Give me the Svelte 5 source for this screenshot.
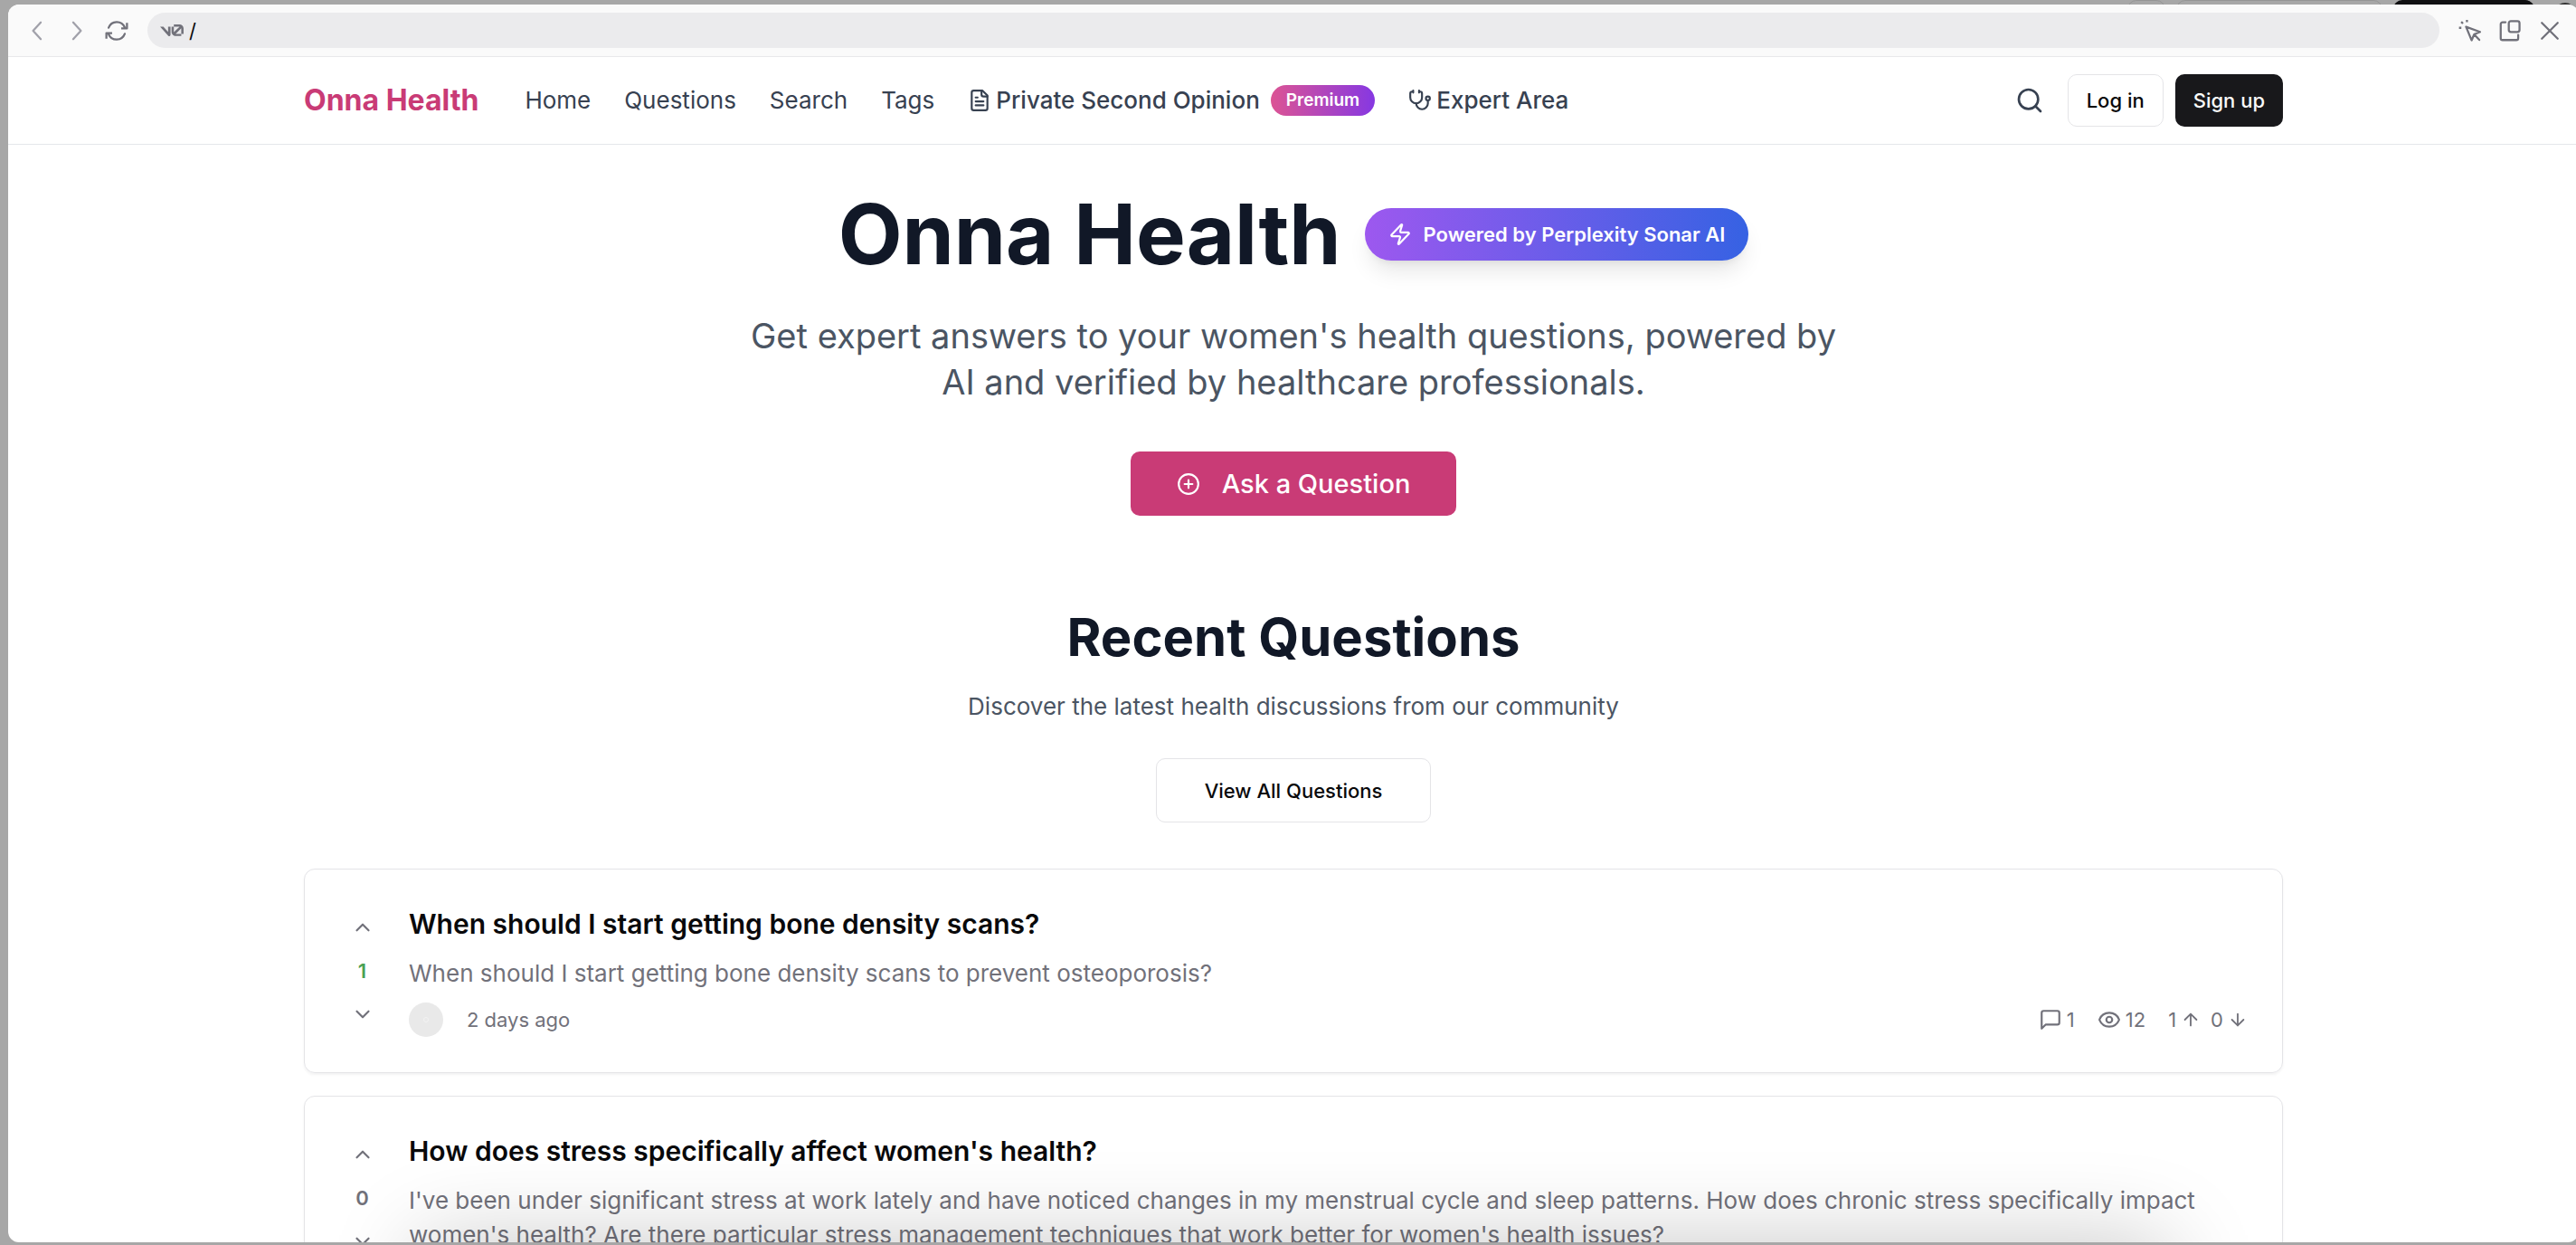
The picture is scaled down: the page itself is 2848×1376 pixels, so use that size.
<script lang="ts">
  interface Question {
    id: number;
    title: string;
    body: string;
    score: number;
    meta?: {
      posted: string;
      comments: number;
      views: number;
      up: number;
      down: number;
    };
  }

  let address = '/';

  const navLinks = ['Home', 'Questions', 'Search', 'Tags'];

  const questions: Question[] = [
    {
      id: 1,
      title: 'When should I start getting bone density scans?',
      body: 'When should I start getting bone density scans to prevent osteoporosis?',
      score: 1,
      meta: { posted: '2 days ago', comments: 1, views: 12, up: 1, down: 0 }
    },
    {
      id: 2,
      title: "How does stress specifically affect women's health?",
      body: "I've been under significant stress at work lately and have noticed changes in my menstrual cycle and sleep patterns. How does chronic stress specifically impact women's health? Are there particular stress management techniques that work better for women's health issues?",
      score: 0
    }
  ];

  let scores: Record<number, number> = Object.fromEntries(questions.map(q => [q.id, q.score]));

  function vote(id: number, delta: number) {
    scores[id] = scores[id] + delta;
  }
</script>

<div class="backdrop">
  <!-- Controls of the editor behind the preview window -->
  <div class="behind" aria-hidden="true">
    <span class="behind-pill small"></span>
    <span class="behind-pill"></span>
    <span class="behind-pill dark"></span>
    <span class="behind-avatar"></span>
  </div>

  <div class="window">
    <div class="toolbar">
      <div class="tools">
        <button class="tool dim" aria-label="Back">
          <svg viewBox="0 0 16 16"><path d="M10.5 2.3 5.3 8l5.2 5.7" /></svg>
        </button>
        <button class="tool dim" aria-label="Forward">
          <svg viewBox="0 0 16 16"><path d="M5.5 2.3 10.7 8l-5.2 5.7" /></svg>
        </button>
        <button class="tool" aria-label="Reload">
          <svg viewBox="0 0 16 16">
            <path d="M2.5 5.9a5.9 5.9 0 0 1 11-.2M13.5 10.1a5.9 5.9 0 0 1-11 .2" />
            <path d="M15 2.6v3.8h-3.9M1 13.4V9.6h3.9" stroke-linecap="butt" />
          </svg>
        </button>
      </div>

      <label class="address">
        <svg class="v0" viewBox="0 0 40 20" aria-hidden="true">
          <path d="M23.392 0h9.527a6.995 6.995 0 0 1 6.995 6.995v9.086h-3.913V6.995c0-.093-.004-.186-.011-.277l-9.527 9.361.097.002h9.441v3.695H26.56c-3.864 0-7.081-3.162-7.081-7.025V3.689h3.913v9.062c0 .174.014.347.04.516l9.736-9.567a3.04 3.04 0 0 0-.249-.011h-9.527V0Z" />
          <path d="M13.769 19.096 0 3.688h5.539l8.084 9.046V3.688h4.131v13.887c0 2.095-2.589 3.083-3.985 1.521Z" />
        </svg>
        <input type="text" aria-label="Address" bind:value={address} />
      </label>

      <div class="tools">
        <button class="tool" aria-label="Select element">
          <svg viewBox="0 0 16 16">
            <path d="M5.2 5.3 14.7 8.8l-4 1.7-1.7 4L5.2 5.3ZM10.7 10.5l3.5 3.7" />
            <path d="M5.8 .6v1.6M1.9 1.9l1.2 1.2M.4 6H2" stroke-linecap="butt" />
          </svg>
        </button>
        <button class="tool" aria-label="Open in new window">
          <svg viewBox="0 0 16 16">
            <path d="M5 2.2H3A1.3 1.3 0 0 0 1.7 3.5V13A1.3 1.3 0 0 0 3 14.3h9.3a1.3 1.3 0 0 0 1.3-1.3v-2.2" />
            <rect x="7.2" y="1.5" width="7.3" height="7.3" rx="1.4" />
          </svg>
        </button>
        <button class="tool" aria-label="Close">
          <svg viewBox="0 0 16 16"><path d="m2.6 2.6 10.8 10.8M13.4 2.6 2.6 13.4" /></svg>
        </button>
      </div>
    </div>

    <div class="page">
      <header class="site-header">
        <div class="container header-row">
          <a class="brand" href="#home">Onna Health</a>
          <nav class="nav">
            {#each navLinks as link}
              <a href="#{link.toLowerCase()}">{link}</a>
            {/each}
            <a class="strong" href="#second-opinion">
              <svg class="icon" viewBox="0 0 24 24">
                <path d="M15 2H6a2 2 0 0 0-2 2v16a2 2 0 0 0 2 2h12a2 2 0 0 0 2-2V7Z" />
                <path d="M14 2v4a2 2 0 0 0 2 2h4M10 9H8M16 13H8M16 17H8" />
              </svg>
              Private Second Opinion
              <span class="premium">Premium</span>
            </a>
            <a class="strong" href="#experts">
              <svg class="icon" viewBox="0 0 24 24">
                <path d="M11 2v2M5 2v2M5 3H4a2 2 0 0 0-2 2v4a6 6 0 0 0 12 0V5a2 2 0 0 0-2-2h-1" />
                <path d="M8 15a6 6 0 0 0 12 0v-3" />
                <circle cx="20" cy="10" r="2" />
              </svg>
              Expert Area
            </a>
          </nav>
          <div class="account">
            <button class="search" aria-label="Search">
              <svg class="icon" viewBox="0 0 24 24">
                <circle cx="11" cy="11" r="8" />
                <path d="m21 21-4.3-4.3" />
              </svg>
            </button>
            <button class="btn outline">Log in</button>
            <button class="btn solid">Sign up</button>
          </div>
        </div>
      </header>

      <main class="container">
        <section class="hero">
          <div class="title-row">
            <h1>Onna Health</h1>
            <span class="powered">
              <svg class="icon" viewBox="0 0 24 24">
                <path d="M4 14a1 1 0 0 1-.78-1.63l9.9-10.2a.5.5 0 0 1 .86.46l-1.92 6.02A1 1 0 0 0 13 10h7a1 1 0 0 1 .78 1.63l-9.9 10.2a.5.5 0 0 1-.86-.46l1.92-6.02A1 1 0 0 0 11 14z" />
              </svg>
              Powered by Perplexity Sonar AI
            </span>
          </div>
          <p class="lead">Get expert answers to your women's health questions, powered by AI and verified by healthcare professionals.</p>
          <button class="btn ask">
            <svg class="icon" viewBox="0 0 24 24">
              <circle cx="12" cy="12" r="10" />
              <path d="M8 12h8M12 8v8" />
            </svg>
            Ask a Question
          </button>
        </section>

        <section class="recent">
          <h2>Recent Questions</h2>
          <p class="sub">Discover the latest health discussions from our community</p>
          <button class="btn outline view-all">View All Questions</button>
        </section>

        <div class="cards">
          {#each questions as question (question.id)}
            <article class="card">
              <div class="votes">
                <button aria-label="Vote up" on:click={() => vote(question.id, 1)}>
                  <svg class="icon" viewBox="0 0 24 24"><path d="m18 15-6-6-6 6" /></svg>
                </button>
                <span class="score" class:positive={scores[question.id] > 0}>{scores[question.id]}</span>
                <button aria-label="Vote down" on:click={() => vote(question.id, -1)}>
                  <svg class="icon" viewBox="0 0 24 24"><path d="m6 9 6 6 6-6" /></svg>
                </button>
              </div>
              <div class="card-body">
                <h3>{question.title}</h3>
                <p>{question.body}</p>
                {#if question.meta}
                  <div class="meta">
                    <span class="avatar"><span class="avatar-dot"></span></span>
                    <span>{question.meta.posted}</span>
                    <div class="stats">
                      <span class="stat">
                        <svg class="icon" viewBox="0 0 24 24">
                          <path d="M21 15a2 2 0 0 1-2 2H7l-4 4V5a2 2 0 0 1 2-2h14a2 2 0 0 1 2 2z" />
                        </svg>
                        {question.meta.comments}
                      </span>
                      <span class="stat">
                        <svg class="icon" viewBox="0 0 24 24">
                          <path d="M2.06 12.35a1 1 0 0 1 0-.7 10.75 10.75 0 0 1 19.88 0 1 1 0 0 1 0 .7 10.75 10.75 0 0 1-19.88 0" />
                          <circle cx="12" cy="12" r="3" />
                        </svg>
                        {question.meta.views}
                      </span>
                      <span class="tally">
                        <span class="stat">
                          {question.meta.up}
                          <svg class="icon arrow" viewBox="0 0 24 24"><path d="m5 12 7-7 7 7M12 19V5" /></svg>
                        </span>
                        <span class="stat">
                          {question.meta.down}
                          <svg class="icon arrow" viewBox="0 0 24 24"><path d="M12 5v14M19 12l-7 7-7-7" /></svg>
                        </span>
                      </span>
                    </div>
                  </div>
                {/if}
              </div>
            </article>
          {/each}
        </div>
      </main>
    </div>
    <div class="bottom-shade" aria-hidden="true"></div>
  </div>
</div>

<style>
  :global(body) {
    background: #a7a7a7;
  }

  .backdrop {
    display: flex;
    flex-direction: column;
    box-sizing: border-box;
    height: 100vh;
    padding: 0 0 3px 9px;
    overflow: hidden;
    font-family: Inter, 'Noto Sans', sans-serif;
    font-size: 26px;
    line-height: 38px;
  }

  h1, h2, h3, p {
    margin: 0;
  }

  button, input {
    font-family: inherit;
  }

  button {
    display: inline-flex;
    align-items: center;
    justify-content: center;
    box-sizing: border-box;
    padding: 0;
    border: none;
    background: transparent;
    color: inherit;
    cursor: pointer;
  }

  a {
    color: inherit;
    text-decoration: none;
  }

  svg {
    display: block;
    flex-shrink: 0;
    fill: none;
    stroke: currentColor;
    stroke-linecap: round;
    stroke-linejoin: round;
  }

  .icon {
    width: 26px;
    height: 26px;
    stroke-width: 2;
  }

  /* Strip above the window */
  .behind {
    display: flex;
    justify-content: flex-end;
    gap: 12px;
    flex: 0 0 5px;
    overflow: hidden;
  }

  .behind-pill {
    box-sizing: border-box;
    width: 228px;
    height: 40px;
    border: 1px solid #959595;
    border-radius: 10px;
  }

  .behind-pill.small {
    width: 42px;
  }

  .behind-pill.dark {
    width: 156px;
    border: none;
    background: #101012;
  }

  .behind-avatar {
    width: 24px;
    height: 24px;
    margin: 3px 0 0 10px;
    border-radius: 50%;
    background: #333;
  }

  /* Preview window */
  .window {
    position: relative;
    display: flex;
    flex-direction: column;
    flex: 1;
    min-height: 0;
    margin-right: -3px;
    border-radius: 12px;
    background: #fff;
    overflow: hidden;
  }

  .toolbar {
    display: flex;
    align-items: center;
    gap: 12px;
    flex: 0 0 57px;
    padding: 0 10px;
    border-bottom: 1px solid #e8e8ea;
    background: #fafafa;
  }

  .tools {
    display: flex;
  }

  .tool {
    width: 44px;
    height: 44px;
    color: #71717a;
  }

  .tool svg {
    width: 26px;
    height: 26px;
    stroke-width: 1.4;
  }

  .tool.dim {
    color: #a1a1aa;
  }

  .address {
    display: flex;
    align-items: center;
    gap: 6px;
    flex: 1;
    height: 39px;
    padding: 0 14px;
    border-radius: 20px;
    background: #ebebed;
  }

  .v0 {
    width: 26px;
    height: 13px;
    fill: #71717a;
    stroke: none;
  }

  .address input {
    flex: 1;
    min-width: 0;
    padding: 0;
    border: none;
    outline: none;
    background: transparent;
    color: #09090b;
    font-size: 22px;
  }

  .page {
    flex: 1;
    min-height: 0;
    overflow: hidden;
  }

  .container {
    box-sizing: border-box;
    max-width: 2188px;
    margin: 0 auto;
  }

  /* Site header */
  .site-header {
    border-bottom: 1px solid #e5e7eb;
  }

  .header-row {
    display: flex;
    align-items: center;
    height: 96px;
  }

  .brand {
    color: #c93b76;
    font-size: 32px;
    font-weight: 700;
  }

  .nav {
    display: flex;
    align-items: center;
    gap: 37px;
    margin-left: 51px;
    color: #374151;
  }

  .nav .strong {
    display: flex;
    align-items: center;
    gap: 5px;
    font-weight: 500;
  }

  .premium {
    display: flex;
    align-items: center;
    height: 34px;
    margin-left: 7px;
    padding: 0 17px;
    border-radius: 17px;
    background: linear-gradient(to right, #dc5494, #8638e2);
    color: #fff;
    font-size: 19px;
    font-weight: 600;
  }

  .account {
    display: flex;
    align-items: center;
    gap: 13px;
    margin-left: auto;
  }

  .search {
    width: 58px;
    height: 58px;
    color: #374151;
  }

  .search .icon {
    width: 32px;
    height: 32px;
  }

  .btn {
    height: 58px;
    padding: 0 20px;
    border-radius: 10px;
    font-size: 22px;
    font-weight: 500;
  }

  .outline {
    border: 1px solid #e4e4e7;
    color: #09090b;
  }

  .solid {
    background: #18181b;
    color: #fafafa;
  }

  /* Hero */
  .hero {
    display: flex;
    flex-direction: column;
    align-items: center;
    padding-top: 51px;
  }

  .title-row {
    display: flex;
    align-items: center;
    gap: 26px;
  }

  h1 {
    color: #111827;
    font-size: 92px;
    font-weight: 700;
    line-height: 96px;
  }

  .powered {
    display: flex;
    align-items: center;
    gap: 13px;
    height: 58px;
    padding: 0 26px;
    border-radius: 29px;
    background: linear-gradient(to right, #9d58ef, #3662e3);
    box-shadow: 0 16px 24px -5px rgba(0, 0, 0, 0.1), 0 6px 10px -6px rgba(0, 0, 0, 0.1);
    color: #fff;
    font-size: 22px;
    font-weight: 600;
  }

  .lead {
    max-width: 1229px;
    margin-top: 39px;
    color: #4b5563;
    font-size: 38px;
    line-height: 51px;
    text-align: center;
  }

  .ask {
    gap: 24px;
    height: 71px;
    margin-top: 51px;
    padding: 0 51px;
    background: #c93b76;
    color: #fff;
    font-size: 29px;
  }

  /* Recent questions */
  .recent {
    display: flex;
    flex-direction: column;
    align-items: center;
    padding-top: 102px;
  }

  h2 {
    color: #111827;
    font-size: 58px;
    font-weight: 700;
    line-height: 64px;
  }

  .sub {
    margin-top: 26px;
    color: #4b5563;
  }

  .view-all {
    height: 71px;
    margin-top: 38px;
    padding: 0 53px;
  }

  .cards {
    display: flex;
    flex-direction: column;
    gap: 25px;
    margin-top: 51px;
  }

  .card {
    display: flex;
    gap: 26px;
    padding: 38px;
    border: 1px solid #e4e4e7;
    border-radius: 12px;
    box-shadow: 0 2px 3px rgba(0, 0, 0, 0.05);
    color: #71717a;
  }

  .votes {
    display: flex;
    flex-direction: column;
    align-items: center;
    gap: 6px;
  }

  .votes button {
    width: 51px;
    height: 52px;
  }

  .score {
    font-size: 22px;
    font-weight: 600;
    line-height: 32px;
  }

  .score.positive {
    color: #4ba154;
  }

  .card-body {
    display: flex;
    flex-direction: column;
    gap: 13px;
    flex: 1;
    min-width: 0;
  }

  h3 {
    color: #09090b;
    font-size: 30px;
    font-weight: 600;
    line-height: 45px;
  }

  .meta {
    display: flex;
    align-items: center;
    font-size: 22px;
  }

  .avatar {
    display: flex;
    align-items: center;
    justify-content: center;
    width: 38px;
    height: 38px;
    margin-right: 26px;
    border-radius: 50%;
    background: #e9e9e9;
  }

  .avatar-dot {
    width: 4px;
    height: 4px;
    border: 1px solid #f3f3f3;
    border-radius: 50%;
  }

  .stats {
    display: flex;
    align-items: center;
    gap: 25px;
    margin-left: auto;
  }

  .stat {
    display: flex;
    align-items: center;
    gap: 5px;
  }

  .tally {
    display: flex;
    gap: 11px;
  }

  .arrow {
    width: 22px;
    height: 22px;
  }

  /* Soft shade rising from under the lower edge */
  .bottom-shade {
    position: absolute;
    top: 100%;
    left: 16%;
    right: 16%;
    height: 200px;
    box-shadow: 0 0 100px rgba(0, 0, 0, 0.22);
    pointer-events: none;
  }
</style>
